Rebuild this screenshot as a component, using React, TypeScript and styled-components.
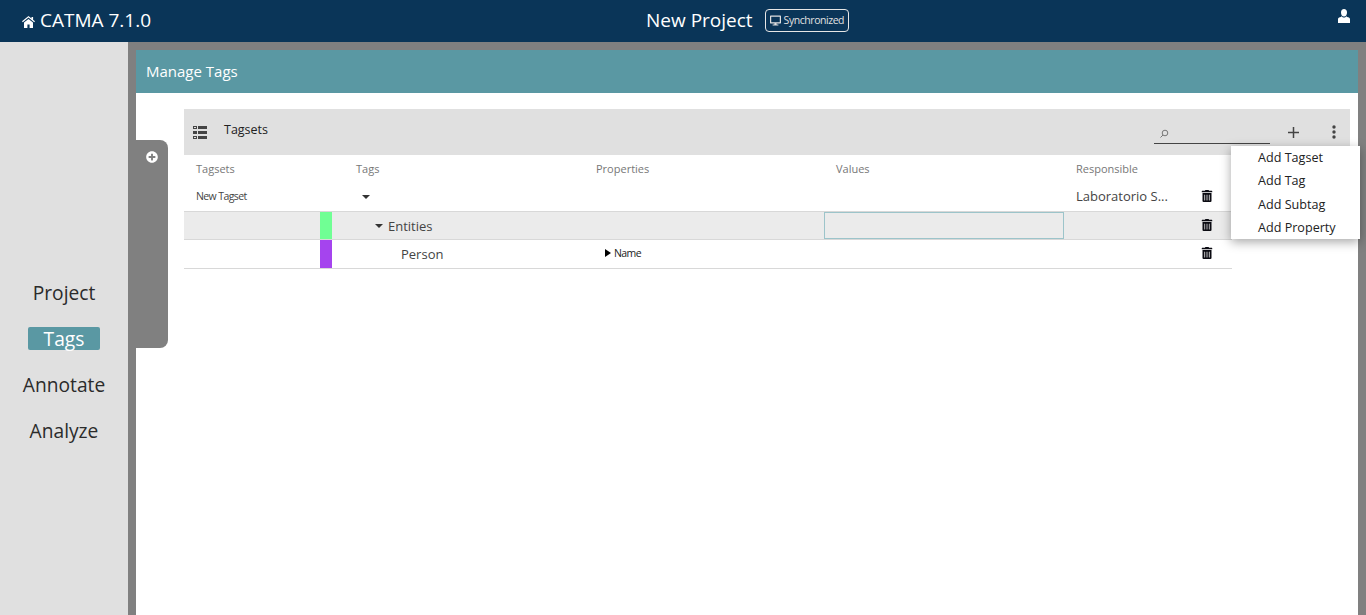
import React from 'react';
import styled, { createGlobalStyle } from 'styled-components';
import { FaPlusCircle, FaTrashAlt, FaDesktop } from 'react-icons/fa';

const GlobalStyle = createGlobalStyle`
  html, body {
    margin: 0;
    height: 100%;
    overflow: hidden;
  }
  body {
    font-family: "Open Sans", "Liberation Sans", sans-serif;
    background: #808080;
  }
  * { box-sizing: border-box; }
`;

const Page = styled.div`
  display: flex;
  flex-direction: column;
  height: 615px;
`;

const Header = styled.header`
  flex: 0 0 42px;
  display: flex;
  align-items: center;
  padding: 0 16px 2px 22px;
  background: #0a3558;
  color: #fff;
`;

const Brand = styled.div`
  display: flex;
  align-items: center;
  gap: 5px;
  width: 624px;
  font-size: 19px;
`;

const ProjectTitle = styled.div`
  flex: 1;
  display: flex;
  align-items: center;
  gap: 12px;
  font-size: 19px;
`;

const SyncBadge = styled.span`
  display: flex;
  align-items: center;
  gap: 3px;
  height: 23px;
  padding: 0 4px;
  border: 1px solid #e6e6e6;
  border-radius: 4px;
  font-size: 10.5px;
  letter-spacing: -0.45px;
  color: #e0e0e0;
  svg { font-size: 11px; }
`;

const UserSlot = styled.div`
  display: flex;
  margin-top: -9px;
`;

const Body = styled.div`
  flex: 1;
  display: flex;
  min-height: 0;
`;

const Sidebar = styled.nav`
  flex: 0 0 128px;
  display: flex;
  flex-direction: column;
  align-items: center;
  gap: 23px;
  padding-top: 239px;
  background: #e0e0e0;
`;

const NavItem = styled.a<{ $active?: boolean }>`
  width: 72px;
  height: 23px;
  line-height: 23px;
  white-space: nowrap;
  display: flex;
  justify-content: center;
  border-radius: 2px;
  font-size: 19.2px;
  color: ${(p) => (p.$active ? '#fff' : '#2b2b2b')};
  background: ${(p) => (p.$active ? '#5a98a3' : 'transparent')};
`;

const Main = styled.main`
  flex: 1;
  padding: 8px 8px 0;
`;

const Card = styled.section`
  position: relative;
  height: 100%;
  display: flex;
  flex-direction: column;
  background: #fff;
`;

const CardTitle = styled.h1`
  flex: 0 0 43px;
  margin: 0;
  padding-left: 10px;
  line-height: 43px;
  font-size: 15px;
  font-weight: 400;
  color: #fff;
  background: #5a98a3;
`;

const Drawer = styled.aside`
  position: absolute;
  top: 90px;
  left: 0;
  width: 32px;
  height: 208px;
  display: flex;
  justify-content: center;
  padding: 11px 1px 0 0;
  background: #808080;
  border-radius: 0 8px 8px 0;
  color: #fff;
  svg { font-size: 12px; }
`;

const Content = styled.div`
  flex: 1;
  padding: 16px 8px 0 48px;
`;

const Toolbar = styled.div`
  height: 46px;
  display: flex;
  align-items: center;
  padding: 0 14px 0 9px;
  background: #e0e0e0;
  color: #444;
`;

const ToolbarTitle = styled.span`
  flex: 1;
  margin-left: 17px;
  margin-top: -5px;
  font-size: 12.5px;
  color: #222;
`;

const SearchField = styled.div`
  width: 116px;
  height: 23px;
  margin: 0 18px 0 0;
  padding: 1px 0 0 5px;
  border-bottom: 1px solid #444;
  color: #777;
`;

const ToolButton = styled.button<{ $gap?: number }>`
  display: flex;
  margin-left: ${(p) => p.$gap ?? 0}px;
  padding: 0;
  border: 0;
  background: none;
  color: #444;
`;

const Table = styled.div`
  width: 1048px;
`;

const Row = styled.div<{ $shaded?: boolean; $ruled?: boolean; $height: number }>`
  display: grid;
  grid-template-columns: 160px 240px 240px 240px 168px;
  height: ${(p) => p.$height}px;
  align-items: center;
  font-size: 13px;
  color: #444;
  background: ${(p) => (p.$shaded ? '#ebebeb' : '#fff')};
  border-bottom: ${(p) => (p.$ruled ? '1px solid #d8d8d8' : '0')};
`;

const HeadCell = styled.div`
  margin-top: -2px;
  padding-left: 12px;
  font-size: 11px;
  color: #777;
`;

const Cell = styled.div<{ $pad?: number; $lift?: number }>`
  height: 100%;
  display: flex;
  align-items: center;
  padding-left: ${(p) => p.$pad ?? 12}px;
  padding-bottom: ${(p) => p.$lift ?? 0}px;
  min-width: 0;
`;

const SwatchCell = styled.div`
  height: 100%;
  display: flex;
  justify-content: flex-end;
  padding-right: 12px;
`;

const Swatch = styled.span<{ $color: string }>`
  width: 12px;
  height: 100%;
  background: ${(p) => p.$color};
`;

const TagsetName = styled.span`
  font-size: 10.5px;
  letter-spacing: -0.6px;
  color: #444;
`;

const PropertyName = styled.span`
  display: flex;
  align-items: center;
  gap: 3px;
  margin-top: -3px;
  font-size: 10.5px;
  letter-spacing: -0.6px;
  color: #222;
`;

const TagName = styled.span`
  display: flex;
  align-items: center;
  gap: 5px;
  color: #444;
`;

const ValuesCell = styled(Cell)<{ $focused?: boolean }>`
  border: 1px solid ${(p) => (p.$focused ? '#9cc4ca' : 'transparent')};
`;

const ActionsCell = styled(Cell)`
  justify-content: space-between;
  padding: 0 19px 2px 12px;
  svg { font-size: 12px; flex: none; color: #0b0b12; }
`;

const Menu = styled.ul`
  position: absolute;
  top: 96px;
  right: -2px;
  width: 129px;
  margin: 0;
  padding: 0;
  list-style: none;
  background: #fff;
  box-shadow: 0 3px 10px rgba(0, 0, 0, 0.35);
`;

const MenuItem = styled.li`
  height: 23.25px;
  line-height: 23.25px;
  padding-left: 27px;
  font-size: 12.6px;
  color: #222;
`;

const HomeIcon = () => (
  <svg width="13" height="12" viewBox="0 0 13 12" fill="currentColor" style={{ marginTop: 3 }}>
    <path d="M6.5 0 9.5 2.4V1h1.6v2.7L13 5.3l-.8.9-5.7-4.6-5.7 4.6L0 5.3z" />
    <path d="M2 6.6 6.5 3l4.5 3.6V12H7.6V8.4H5.4V12H2z" />
  </svg>
);

const UserIcon = () => (
  <svg width="12" height="14" viewBox="0 0 12 14" fill="currentColor">
    <path d="M6 0c1.9 0 3 1.4 3 3.4C9 5.6 7.9 7.6 6 7.6S3 5.6 3 3.4C3 1.4 4.1 0 6 0z" />
    <path d="M3.6 7.2C4.2 8 5 8.5 6 8.5s1.8-.5 2.4-1.3c.3.5.9.8 1.7 1.1 1.2.4 1.9.9 1.9 2V14H0v-3.7c0-1.1.7-1.6 1.9-2 .8-.3 1.4-.6 1.7-1.1z" />
  </svg>
);

const TagsetsIcon = () => (
  <svg width="14" height="13" viewBox="0 0 14 13" fill="currentColor">
    <path d="M0 0h4v3H0zM1 1v1h2V1zM0 5h4v3H0zM0 10h4v3H0zM1 11v1h2v-1z" fillRule="evenodd" />
    <path d="M5 0h9v3H5zM5 5h9v3H5zM5 10h9v3H5z" />
  </svg>
);

const SearchIcon = () => (
  <svg width="10" height="10" viewBox="0 0 10 10" fill="none" stroke="currentColor" strokeWidth="1">
    <circle cx="6" cy="4" r="2.8" />
    <path d="M4 6 1.5 8.5" />
  </svg>
);

const PlusIcon = () => (
  <svg width="11" height="11" viewBox="0 0 11 11" fill="none" stroke="currentColor" strokeWidth="1.5">
    <path d="M5.5 0v11M0 5.5h11" />
  </svg>
);

const DotsIcon = () => (
  <svg width="4" height="14" viewBox="0 0 4 14" fill="currentColor">
    <circle cx="2" cy="2" r="1.7" />
    <circle cx="2" cy="7" r="1.7" />
    <circle cx="2" cy="12" r="1.7" />
  </svg>
);

const CaretDown = () => (
  <svg width="8" height="4" viewBox="0 0 8 4" fill="#333">
    <path d="M0 0h8L4 4z" />
  </svg>
);

const CaretRight = () => (
  <svg width="6" height="8" viewBox="0 0 6 8" fill="#000">
    <path d="M0 0l6 4-6 4z" />
  </svg>
);

const menuItems = ['Add Tagset', 'Add Tag', 'Add Subtag', 'Add Property'];
const navItems = ['Project', 'Tags', 'Annotate', 'Analyze'];

export default function App() {
  return (
    <Page>
      <GlobalStyle />
      <Header>
        <Brand>
          <HomeIcon />
          CATMA 7.1.0
        </Brand>
        <ProjectTitle>
          New Project
          <SyncBadge>
            <FaDesktop />
            Synchronized
          </SyncBadge>
        </ProjectTitle>
        <UserSlot>
          <UserIcon />
        </UserSlot>
      </Header>
      <Body>
        <Sidebar>
          {navItems.map((item) => (
            <NavItem key={item} $active={item === 'Tags'}>
              {item}
            </NavItem>
          ))}
        </Sidebar>
        <Main>
          <Card>
            <CardTitle>Manage Tags</CardTitle>
            <Drawer>
              <FaPlusCircle />
            </Drawer>
            <Content>
              <Toolbar>
                <TagsetsIcon />
                <ToolbarTitle>Tagsets</ToolbarTitle>
                <SearchField>
                  <SearchIcon />
                </SearchField>
                <ToolButton>
                  <PlusIcon />
                </ToolButton>
                <ToolButton $gap={33}>
                  <DotsIcon />
                </ToolButton>
              </Toolbar>
              <Table>
                <Row $height={28}>
                  <HeadCell>Tagsets</HeadCell>
                  <HeadCell>Tags</HeadCell>
                  <HeadCell>Properties</HeadCell>
                  <HeadCell>Values</HeadCell>
                  <HeadCell>Responsible</HeadCell>
                </Row>
                <Row $height={29} $ruled>
                  <Cell $lift={2}>
                    <TagsetName>New Tagset</TagsetName>
                  </Cell>
                  <Cell $pad={18}>
                    <CaretDown />
                  </Cell>
                  <Cell />
                  <Cell />
                  <ActionsCell>
                    Laboratorio S...
                    <FaTrashAlt />
                  </ActionsCell>
                </Row>
                <Row $height={28} $shaded $ruled>
                  <SwatchCell>
                    <Swatch $color="#70ff94" />
                  </SwatchCell>
                  <Cell $pad={31}>
                    <TagName>
                      <CaretDown />
                      Entities
                    </TagName>
                  </Cell>
                  <Cell />
                  <ValuesCell $focused />
                  <ActionsCell>
                    <span />
                    <FaTrashAlt />
                  </ActionsCell>
                </Row>
                <Row $height={29} $ruled>
                  <SwatchCell>
                    <Swatch $color="#a544ee" />
                  </SwatchCell>
                  <Cell $pad={57}>
                    <TagName>Person</TagName>
                  </Cell>
                  <Cell $pad={21}>
                    <PropertyName>
                      <CaretRight />
                      Name
                    </PropertyName>
                  </Cell>
                  <Cell />
                  <ActionsCell>
                    <span />
                    <FaTrashAlt />
                  </ActionsCell>
                </Row>
              </Table>
            </Content>
            <Menu>
              {menuItems.map((item) => (
                <MenuItem key={item}>{item}</MenuItem>
              ))}
            </Menu>
          </Card>
        </Main>
      </Body>
    </Page>
  );
}
